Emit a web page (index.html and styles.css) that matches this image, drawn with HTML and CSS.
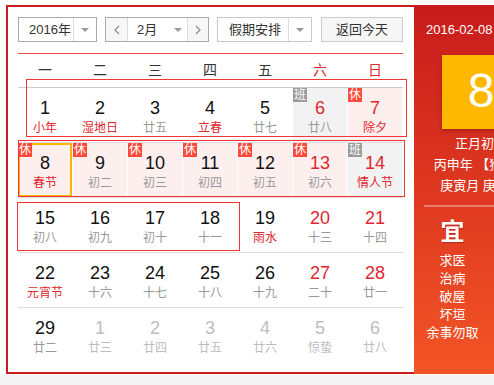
FILE: index.html
```html
<!DOCTYPE html>
<html lang="zh-CN">
<head>
<meta charset="utf-8">
<title>万年历</title>
<link rel="stylesheet" href="styles.css">
</head>
<body>
<div class="stage">
  <div class="widget">
    <div class="cal">
      <div class="toolbar">
        <div class="sel year"><span class="sel-text">2016年</span><span class="sel-arrow"><i class="tri"></i></span></div>
        <div class="month">
          <span class="nav prev"><svg width="6" height="10" viewBox="0 0 6 10"><polyline points="5,1 1,5 5,9" fill="none" stroke="#8a8a8a" stroke-width="1.2"/></svg></span>
          <span class="month-text">2月</span><span class="month-arrow"><i class="tri"></i></span>
          <span class="nav next"><svg width="6" height="10" viewBox="0 0 6 10"><polyline points="1,1 5,5 1,9" fill="none" stroke="#8a8a8a" stroke-width="1.2"/></svg></span>
        </div>
        <div class="sel holiday"><span class="sel-text">假期安排</span><span class="sel-arrow"><i class="tri"></i></span></div>
        <div class="btn">返回今天</div>
      </div>
      <div class="week">
        <span>一</span><span>二</span><span>三</span><span>四</span><span>五</span><span class="we">六</span><span class="we">日</span>
      </div>
      <div class="days">
        <div class="row">
          <div class="cell"><b class="num">1</b><span class="lunar fest">小年</span></div>
          <div class="cell"><b class="num">2</b><span class="lunar fest">湿地日</span></div>
          <div class="cell"><b class="num">3</b><span class="lunar">廿五</span></div>
          <div class="cell"><b class="num">4</b><span class="lunar fest">立春</span></div>
          <div class="cell"><b class="num">5</b><span class="lunar">廿七</span></div>
          <div class="cell work"><i class="tag">班</i><b class="num red">6</b><span class="lunar">廿八</span></div>
          <div class="cell rest"><i class="tag">休</i><b class="num red">7</b><span class="lunar fest">除夕</span></div>
        </div>
        <div class="row">
          <div class="cell rest today"><i class="tag">休</i><b class="num">8</b><span class="lunar fest">春节</span></div>
          <div class="cell rest"><i class="tag">休</i><b class="num">9</b><span class="lunar">初二</span></div>
          <div class="cell rest"><i class="tag">休</i><b class="num">10</b><span class="lunar">初三</span></div>
          <div class="cell rest"><i class="tag">休</i><b class="num">11</b><span class="lunar">初四</span></div>
          <div class="cell rest"><i class="tag">休</i><b class="num">12</b><span class="lunar">初五</span></div>
          <div class="cell rest"><i class="tag">休</i><b class="num red">13</b><span class="lunar">初六</span></div>
          <div class="cell work"><i class="tag">班</i><b class="num red">14</b><span class="lunar fest">情人节</span></div>
        </div>
        <div class="row">
          <div class="cell"><b class="num">15</b><span class="lunar">初八</span></div>
          <div class="cell"><b class="num">16</b><span class="lunar">初九</span></div>
          <div class="cell"><b class="num">17</b><span class="lunar">初十</span></div>
          <div class="cell"><b class="num">18</b><span class="lunar">十一</span></div>
          <div class="cell"><b class="num">19</b><span class="lunar fest">雨水</span></div>
          <div class="cell"><b class="num red">20</b><span class="lunar">十三</span></div>
          <div class="cell"><b class="num red">21</b><span class="lunar">十四</span></div>
        </div>
        <div class="row">
          <div class="cell"><b class="num">22</b><span class="lunar fest">元宵节</span></div>
          <div class="cell"><b class="num">23</b><span class="lunar">十六</span></div>
          <div class="cell"><b class="num">24</b><span class="lunar">十七</span></div>
          <div class="cell"><b class="num">25</b><span class="lunar">十八</span></div>
          <div class="cell"><b class="num">26</b><span class="lunar">十九</span></div>
          <div class="cell"><b class="num red">27</b><span class="lunar">二十</span></div>
          <div class="cell"><b class="num red">28</b><span class="lunar">廿一</span></div>
        </div>
        <div class="row">
          <div class="cell"><b class="num">29</b><span class="lunar">廿二</span></div>
          <div class="cell other"><b class="num">1</b><span class="lunar">廿三</span></div>
          <div class="cell other"><b class="num">2</b><span class="lunar">廿四</span></div>
          <div class="cell other"><b class="num">3</b><span class="lunar">廿五</span></div>
          <div class="cell other"><b class="num">4</b><span class="lunar">廿六</span></div>
          <div class="cell other"><b class="num">5</b><span class="lunar">惊蛰</span></div>
          <div class="cell other"><b class="num">6</b><span class="lunar">廿八</span></div>
        </div>
      </div>
    </div>
    <div class="side">
      <div class="side-date">2016-02-08</div>
      <div class="bigday">8</div>
      <div class="side-lunar">
        <div>正月初一</div>
        <div>丙申年 【猴年】</div>
        <div>庚寅月 庚申日</div>
      </div>
      <div class="side-sep"></div>
      <div class="yiji">
        <div class="yj-col">
          <div class="yj-title">宜</div>
          <div class="yj-item">求医</div>
          <div class="yj-item">治病</div>
          <div class="yj-item">破屋</div>
          <div class="yj-item">坏垣</div>
          <div class="yj-item">余事勿取</div>
        </div>
        <div class="yj-col"></div>
      </div>
    </div>
  </div>
  <div class="footer"></div>
  <div class="mark mark-1"></div>
  <div class="mark mark-2"></div>
  <div class="mark mark-3"></div>
</div>
</body>
</html>
```

FILE: styles.css
```css
* { box-sizing: border-box; }
html, body { margin: 0; padding: 0; background: #fff; overflow: hidden; }
body {
  font-family: "Liberation Sans", "Noto Sans CJK SC", sans-serif;
  font-size: 13px;
  color: #333;
}
.stage { position: relative; padding-top: 5px; width: 494px; height: 385px; }
.widget {
  display: flex;
  margin-left: 6px;
  width: 488px;
  height: 369px;
  overflow: hidden;
}
.cal {
  flex: 0 0 408px;
  height: 369px;
  border: 2px solid #c91c1c;
  border-right: none;
  padding: 10px 11px 10px 10px;
}
.toolbar { display: flex; height: 25px; gap: 8px; }
.sel {
  display: flex;
  height: 25px;
  border: 1px solid #a9a9a9;
  background: #fff;
  line-height: 23px;
  color: #333;
}
.sel-text { padding-left: 10px; }
.year { width: 79px; }
.year .sel-text { width: 54px; }
.sel-arrow {
  flex: 1;
  border-left: 1px solid #dcdcdc;
  display: flex;
  align-items: center;
  justify-content: center;
}
.tri {
  display: block;
  width: 0; height: 0;
  border-left: 4px solid transparent;
  border-right: 4px solid transparent;
  border-top: 4px solid #999;
}
.month {
  display: flex;
  width: 104px;
  height: 25px;
  border: 1px solid #a9a9a9;
  line-height: 23px;
}
.nav {
  display: flex;
  align-items: center;
  justify-content: center;
  background: #f7f7f7;
}
.prev { width: 22px; border-right: 1px solid #dcdcdc; }
.next { width: 21px; border-left: 1px solid #dcdcdc; }
.month-text { padding-left: 9px; width: 40px; }
.month-arrow { width: 19px; display: flex; align-items: center; justify-content: center; }
.holiday { width: 95px; border-color: #c8c8c8; }
.holiday .sel-text { width: 70px; padding-left: 11px; }
.btn {
  margin-left: auto;
  width: 82px;
  height: 25px;
  border: 1px solid #cdcdcd;
  background: #f6f6f6;
  text-align: center;
  line-height: 23px;
  color: #333;
}
.week {
  margin-top: 11px;
  border-top: 1px solid #ef4d4d;
  border-bottom: 1px solid #cccccc;
  height: 35px;
  display: grid;
  grid-template-columns: repeat(7, 54px);
  column-gap: 1px;
  align-items: center;
  font-size: 14px;
  line-height: 33px;
  text-align: center;
  color: #333;
}
.week .we { color: #e02a2a; }
.days { width: 385px; }
.row {
  display: grid;
  grid-template-columns: repeat(7, 54px);
  column-gap: 1px;
  border-bottom: 1px solid #dddddd;
}
.row:last-child { border-bottom: none; }
.cell {
  position: relative;
  height: 54px;
  padding-top: 10px;
  text-align: center;
}
.cell.rest { background: #fdefee; }
.cell.work { background: #f2f2f2; }
.cell.today { box-shadow: inset 0 0 0 2px #fbb400; }
.num {
  display: block;
  font-weight: normal;
  font-size: 18px;
  line-height: 20px;
  color: #111;
}
.num.red { color: #e0262e; }
.lunar {
  display: block;
  margin-top: 2px;
  font-size: 12px;
  line-height: 16px;
  color: #999;
}
.lunar.fest { color: #e0262e; }
.other .num, .other .lunar { color: #bdbdbd; }
.tag {
  position: absolute;
  left: 0; top: 0;
  width: 14px; height: 14px;
  font-style: normal;
  font-size: 12px;
  line-height: 14px;
  text-align: center;
  color: #fff;
  background: #ff4a3a;
}
.work .tag { background: #9b9b9b; }
.side {
  flex: 0 0 134px;
  height: 369px;
  background: linear-gradient(to bottom, #c81b1b, #f35526);
  color: #fff;
}
.side-date {
  padding: 15px 0 0 12px;
  font-size: 13px;
  line-height: 20px;
}
.bigday {
  margin: 15px 0 0 28px;
  width: 78px;
  height: 74px;
  background: #ffb800;
  box-shadow: 0 2px 4px rgba(90, 0, 0, 0.35);
  text-align: center;
  font-size: 48px;
  line-height: 72px;
  color: #fff;
}
.side-lunar {
  margin-top: 4px;
  text-align: center;
  font-size: 13px;
  line-height: 21px;
}
.side-sep {
  margin: 9px 0 0 10px;
  height: 2px;
  background: rgba(255, 255, 255, 0.35);
}
.yiji { display: flex; margin: 0 10px; }
.yj-col { flex: 1; text-align: center; }
.yj-title {
  margin-top: 10px;
  font-size: 24px;
  font-weight: bold;
  line-height: 30px;
  text-shadow: 1px 1px 1px rgba(120, 0, 40, 0.4);
}
.yj-item { font-size: 13px; line-height: 18px; }
.yj-title + .yj-item { margin-top: 5px; }
.footer { margin-top: 1px; height: 12px; background: #f4f4f4; }
.mark {
  position: absolute;
  border: 1px solid #f03636;
  pointer-events: none;
}
.mark-1 { left: 26px; top: 79px; width: 381px; height: 58px; }
.mark-2 { left: 18px; top: 140px; width: 387px; height: 57px; }
.mark-3 { left: 17px; top: 202px; width: 223px; height: 49px; }
```
